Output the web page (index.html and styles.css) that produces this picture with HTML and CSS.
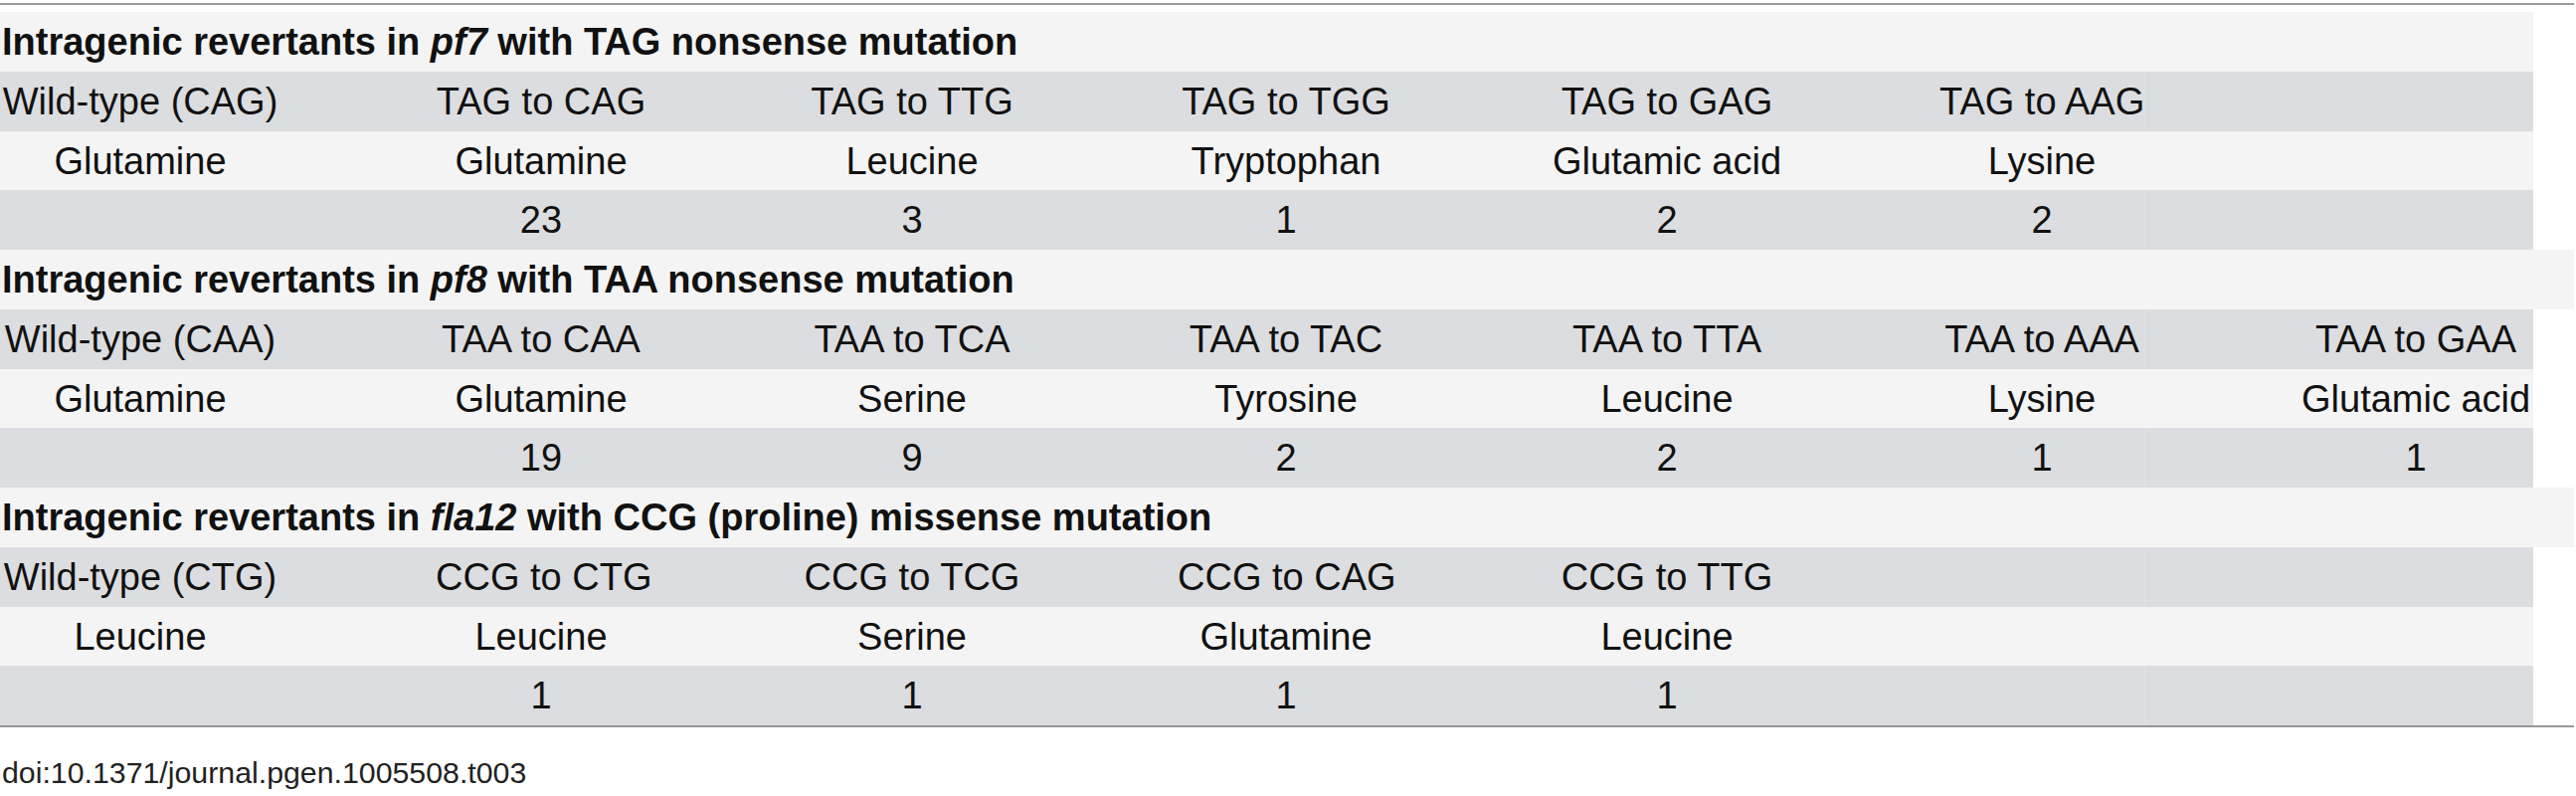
FILE: index.html
```html
<!DOCTYPE html>
<html lang="en">
<head>
<meta charset="utf-8">
<title>Intragenic revertants</title>
<link rel="stylesheet" href="styles.css">
</head>
<body>
<div class="page">
  <div class="rule"></div>
  <div class="table">
    <div class="title">Intragenic revertants in <i>pf7</i> with TAG nonsense mutation</div>
    <div class="row dark"><div class="c">Wild-type (CAG)</div><div class="c">TAG to CAG</div><div class="c">TAG to TTG</div><div class="c">TAG to TGG</div><div class="c">TAG to GAG</div><div class="c c6">TAG to AAG</div><div class="c"></div></div>
    <div class="row light"><div class="c">Glutamine</div><div class="c">Glutamine</div><div class="c">Leucine</div><div class="c">Tryptophan</div><div class="c">Glutamic acid</div><div class="c c6">Lysine</div><div class="c"></div></div>
    <div class="row dark"><div class="c"></div><div class="c">23</div><div class="c">3</div><div class="c">1</div><div class="c">2</div><div class="c c6">2</div><div class="c"></div></div>

    <div class="title wide">Intragenic revertants in <i>pf8</i> with TAA nonsense mutation</div>
    <div class="row dark"><div class="c">Wild-type (CAA)</div><div class="c">TAA to CAA</div><div class="c">TAA to TCA</div><div class="c">TAA to TAC</div><div class="c">TAA to TTA</div><div class="c c6">TAA to AAA</div><div class="c">TAA to GAA</div></div>
    <div class="row light"><div class="c">Glutamine</div><div class="c">Glutamine</div><div class="c">Serine</div><div class="c">Tyrosine</div><div class="c">Leucine</div><div class="c c6">Lysine</div><div class="c">Glutamic acid</div></div>
    <div class="row dark"><div class="c"></div><div class="c">19</div><div class="c">9</div><div class="c">2</div><div class="c">2</div><div class="c c6">1</div><div class="c">1</div></div>

    <div class="title wide">Intragenic revertants in <i>fla12</i> with CCG (proline) missense mutation</div>
    <div class="row dark"><div class="c">Wild-type (CTG)</div><div class="c">CCG to CTG</div><div class="c">CCG to TCG</div><div class="c">CCG to CAG</div><div class="c">CCG to TTG</div><div class="c c6"></div><div class="c"></div></div>
    <div class="row light"><div class="c">Leucine</div><div class="c">Leucine</div><div class="c">Serine</div><div class="c">Glutamine</div><div class="c">Leucine</div><div class="c c6"></div><div class="c"></div></div>
    <div class="row dark"><div class="c"></div><div class="c">1</div><div class="c">1</div><div class="c">1</div><div class="c">1</div><div class="c c6"></div><div class="c"></div></div>
  </div>
  <div class="rule bottom"></div>
  <div class="doi">doi:10.1371/journal.pgen.1005508.t003</div>
</div>
</body>
</html>
```

FILE: styles.css
```css
html, body {
  margin: 0;
  padding: 0;
  background: #ffffff;
}

body {
  font-family: "Liberation Sans", Arial, Helvetica, sans-serif;
  color: #111111;
  width: 2590px;
  overflow: hidden;
}

.page {
  padding-top: 3px;
}

.rule {
  width: 2588px;
  height: 2px;
  background: #9c9c9c;
}

.rule.bottom {
  background: #979797;
}

.table {
  margin-top: 7px;
  display: flex;
  flex-direction: column;
}

.title {
  width: 2547px;
  height: 59.75px;
  box-sizing: border-box;
  padding-left: 2px;
  padding-top: 2px;
  background: #f4f4f4;
  font-size: 38px;
  font-weight: bold;
  line-height: 57.75px;
  white-space: nowrap;
}

.title.wide {
  width: 2588px;
}

.title i {
  font-style: italic;
}

.row {
  width: 2547px;
  height: 59.75px;
  box-sizing: border-box;
  padding-left: 2px;
  display: grid;
  grid-template-columns: 278px 212px 218px 218px 232px 206px 230px;
  column-gap: 158px;
  font-size: 38px;
}

.row.dark {
  background: #dcdde0;
}

.row.light {
  background: #f4f4f4;
}

.c {
  text-align: center;
  white-space: nowrap;
  padding-top: 2px;
  box-sizing: border-box;
  height: 59.75px;
  line-height: 57.75px;
}

.row.dark .c6 {
  box-shadow: 2px 0 0 -1px #e1e2e4;
}

.doi {
  margin-top: 28px;
  padding-left: 2px;
  font-size: 30.3px;
  line-height: 36px;
  color: #222222;
}
```
